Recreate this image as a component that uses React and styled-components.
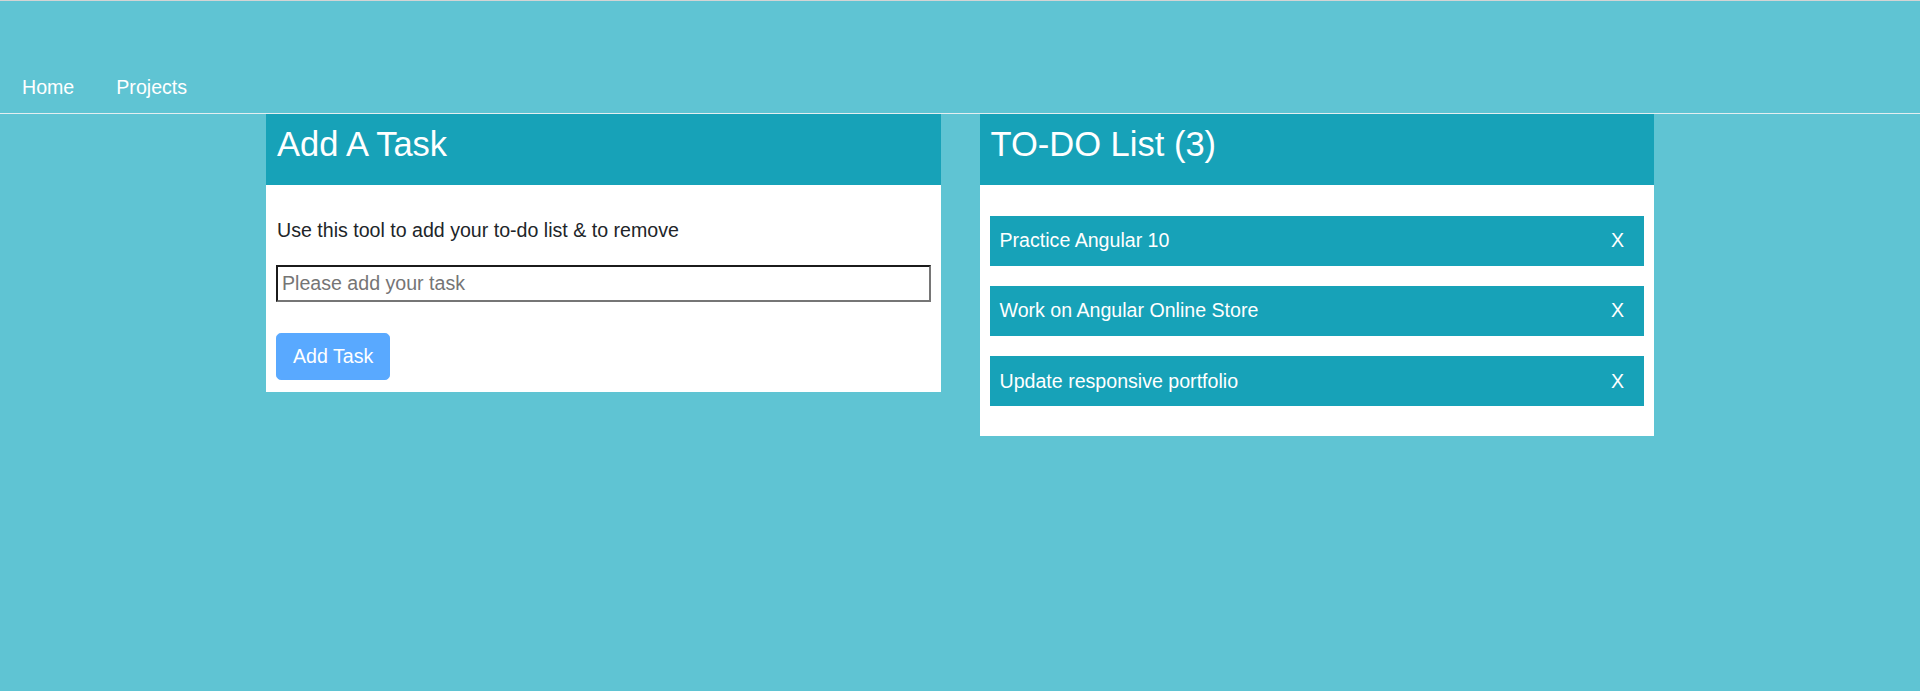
import styled, { createGlobalStyle } from 'styled-components';

const GlobalStyle = createGlobalStyle`
    html, body {
        margin: 0;
        padding: 0;
    }

    body {
        min-height: 100vh;
        background: #5fc4d3;
        border-top: 1px solid #d4d4d4;
        box-sizing: border-box;
        font-family: 'Liberation Sans', Arial, sans-serif;
        font-size: 19.6px;
        line-height: 1.5;
        color: #212529;
    }

    *, *::before, *::after {
        box-sizing: border-box;
    }
`;

const NavStyled = styled.nav`
    display: flex;
    align-items: flex-end;
    height: 113px;
    border-bottom: 1px solid #e4eef0;
`;

const NavLink = styled.a`
    padding: 10px 21px 10.5px 22px;
    color: #fff;
    font-size: 19.6px;
    line-height: 29.4px;
    text-decoration: none;
    cursor: pointer;

    & + & {
        padding-left: 21px;
    }
`;

const ContainerStyled = styled.main`
    display: flex;
    align-items: flex-start;
    gap: 39px;
    width: 1388px;
    margin: 0 auto;
`;

const CardStyled = styled.section`
    flex: 1;
    background: #fff;
`;

const CardHeader = styled.div`
    padding: 10px 11px;
    background: #17a2b8;
`;

const CardTitle = styled.h3`
    margin: 0 0 9.8px;
    color: #fff;
    font-size: 34.5px;
    font-weight: normal;
    line-height: 1.2;
`;

const CardBody = styled.div`
    padding: ${(props) => (props.$list ? '10px' : '11px 10px 11.5px 10px')};
`;

const Intro = styled.p`
    margin: 19.6px 0 19.6px 1px;
`;

const TaskInput = styled.input`
    display: block;
    width: 100%;
    height: 37px;
    padding: 1px 4px;
    border-style: solid;
    border-width: 2.4px;
    border-color: #1b1b1b #767676 #767676 #1b1b1b;
    font-family: inherit;
    font-size: 19.6px;
    color: #212529;
    background: #fff;
    outline: none;

    &::placeholder {
        color: #757575;
    }
`;

const AddButton = styled.button`
    display: inline-block;
    margin-top: 31px;
    padding: 8px 16px;
    border: 1.2px solid #59a9ff;
    border-radius: 4.9px;
    background: #59a9ff;
    color: #fff;
    font-family: inherit;
    font-size: 19.6px;
    line-height: 1.5;
    cursor: default;
`;

const TaskList = styled.ul`
    display: flex;
    flex-direction: column;
    gap: 20.3px;
    margin: 0;
    padding: 21px 0 20px;
    list-style: none;
`;

const TaskItem = styled.li`
    display: flex;
    justify-content: space-between;
    align-items: center;
    padding: 10.2px 20px 10.2px 10px;
    background: #17a2b8;
    color: #fff;
    line-height: 29.4px;
`;

const RemoveButton = styled.span`
    color: #fff;
    cursor: pointer;
`;

const tasks = ['Practice Angular 10', 'Work on Angular Online Store', 'Update responsive portfolio'];

function App() {
    return (
        <>
            <GlobalStyle />
            <NavStyled>
                <NavLink>Home</NavLink>
                <NavLink>Projects</NavLink>
            </NavStyled>
            <ContainerStyled>
                <CardStyled>
                    <CardHeader>
                        <CardTitle>Add A Task</CardTitle>
                    </CardHeader>
                    <CardBody>
                        <Intro>Use this tool to add your to-do list &amp; to remove</Intro>
                        <TaskInput type="text" placeholder="Please add your task" />
                        <AddButton disabled>Add Task</AddButton>
                    </CardBody>
                </CardStyled>
                <CardStyled>
                    <CardHeader>
                        <CardTitle>TO-DO List ({tasks.length})</CardTitle>
                    </CardHeader>
                    <CardBody $list>
                        <TaskList>
                            {tasks.map((task) => (
                                <TaskItem key={task}>
                                    {task}
                                    <RemoveButton>X</RemoveButton>
                                </TaskItem>
                            ))}
                        </TaskList>
                    </CardBody>
                </CardStyled>
            </ContainerStyled>
        </>
    );
}

export default App;
